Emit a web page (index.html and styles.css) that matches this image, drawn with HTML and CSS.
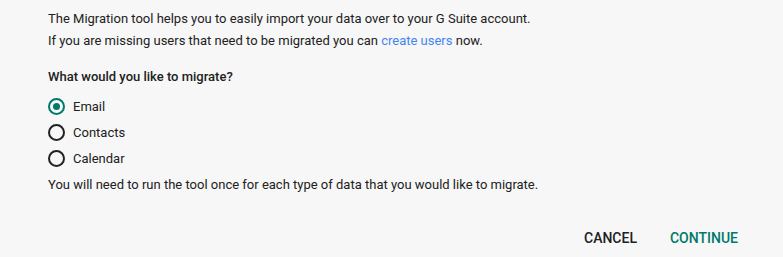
FILE: index.html
```html
<!DOCTYPE html>
<html>
<head>
<meta charset="utf-8">
<link rel="stylesheet" href="styles.css">
</head>
<body>
<div class="dialog">
  <p class="line first">The Migration tool helps you to easily import your data over to your G Suite account.</p>
  <p class="line">If you are missing users that need to be migrated you can <a class="link" href="#">create users</a> now.</p>
  <p class="question">What would you like to migrate?</p>
  <div class="options">
    <label class="option"><span class="radio checked"></span><span>Email</span></label>
    <label class="option"><span class="radio"></span><span>Contacts</span></label>
    <label class="option"><span class="radio"></span><span>Calendar</span></label>
  </div>
  <p class="line note">You will need to run the tool once for each type of data that you would like to migrate.</p>
  <div class="actions">
    <button class="btn cancel">CANCEL</button>
    <button class="btn continue">CONTINUE</button>
  </div>
</div>
</body>
</html>
```
FILE: styles.css
```css
html, body {
  margin: 0;
  padding: 0;
  background: #f7f7f7;
}
body {
  font-family: Roboto, "Liberation Sans", sans-serif;
  font-size: 13px;
  color: #212121;
}
.dialog {
  padding: 8px 0 0 48px;
  width: 738px;
  box-sizing: border-box;
}
.line {
  margin: 0;
  line-height: 22px;
}
.link {
  color: #4285f4;
  text-decoration: none;
}
.question {
  margin: 14px 0 0;
  font-weight: 500;
  line-height: 22px;
}
.options {
  display: flex;
  flex-direction: column;
  margin-top: 5px;
}
.option {
  display: flex;
  align-items: center;
  gap: 8px;
  height: 26px;
}
.radio {
  width: 13px;
  height: 13px;
  border: 2px solid #212121;
  border-radius: 50%;
  box-sizing: content-box;
  display: flex;
  align-items: center;
  justify-content: center;
}
.radio.checked {
  border-color: #00796b;
}
.radio.checked::after {
  content: "";
  width: 7px;
  height: 7px;
  border-radius: 50%;
  background: #00796b;
}
.note {
  margin-top: 3px;
}
.actions {
  display: flex;
  justify-content: flex-end;
  gap: 33px;
  margin-top: 34px;
}
.btn {
  background: none;
  border: none;
  padding: 0;
  font-family: Roboto, "Liberation Sans", sans-serif;
  font-size: 14px;
  font-weight: 500;
  color: #212121;
  cursor: pointer;
}
.btn.continue {
  color: #00796b;
}
```
